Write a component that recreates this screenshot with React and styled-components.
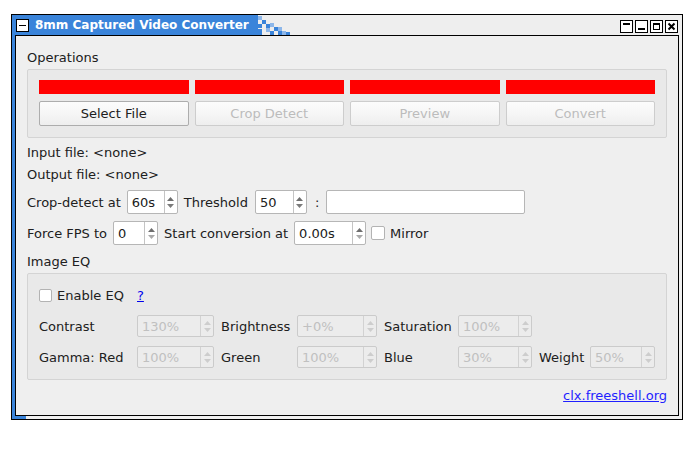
import React from "react";
import styled, { createGlobalStyle } from "styled-components";

const BLUE = "#3a84da";
const LIGHTBLUE = "#8db7ea";

const GlobalStyle = createGlobalStyle`
  html, body { margin: 0; padding: 0; background: #ffffff; }
  body {
    font-family: "DejaVu Sans", "Liberation Sans", sans-serif;
    font-size: 13px;
    color: #202020;
  }
`;

const Desktop = styled.div`
  padding: 14px 0 0 11px;
`;

const Window = styled.div`
  box-sizing: border-box;
  width: 672px;
  height: 406px;
  border: 1px solid #000;
  background: #f0f0f0;
  display: flex;
  flex-direction: column;
`;

const TitleBar = styled.div`
  height: 20px;
  flex: none;
  display: flex;
  align-items: stretch;
  background: #eeeeee;
`;

const TitleActive = styled.div`
  width: 242px;
  box-sizing: border-box;
  display: flex;
  align-items: center;
  gap: 6px;
  padding-left: 4px;
  background: ${BLUE};
  color: #ffffff;
  font-weight: bold;
  font-size: 12px;
  white-space: nowrap;
`;

const Spacer = styled.div`
  flex: 1;
`;

const WinButtons = styled.div`
  display: flex;
  gap: 2px;
  padding-top: 5px;
  margin-right: 4px;
`;

const WinBtn = styled.svg`
  display: block;
  flex: none;
`;

const Body = styled.div`
  flex: 1;
  display: flex;
  min-height: 0;
`;

const SideEdge = styled.div`
  width: 3px;
  flex: none;
  background: ${(p) => (p.$blue ? BLUE : "#f0f0f0")};
`;

const Client = styled.main`
  flex: 1;
  min-width: 0;
  border: 1px solid #000;
  background: #efefef;
  padding: 0 11px;
  display: flex;
  flex-direction: column;
`;

const BottomEdge = styled.div`
  height: 3px;
  flex: none;
  display: flex;
`;

const Grip = styled.div`
  width: 14px;
  background: ${BLUE};
`;

const Caption = styled.div`
  line-height: 16px;
  height: 16px;
  margin-top: ${(p) => p.$mt || 0}px;
  white-space: nowrap;
`;

const GroupBox = styled.section`
  border: 1px solid #d4d4d4;
  border-radius: 2px;
  background: #e9e9e9;
  padding: 10px 11px 11px;
  margin-top: ${(p) => p.$mt || 0}px;
`;

const OpsGrid = styled.div`
  display: grid;
  grid-template-columns: repeat(4, 1fr);
  column-gap: 6px;
  row-gap: 7px;
`;

const RedBar = styled.div`
  height: 14px;
  background: #ff0000;
`;

const PushButton = styled.button`
  height: 25px;
  margin: 0;
  padding: 0;
  font-family: inherit;
  font-size: 13px;
  border-radius: 2px;
  border: 1px solid ${(p) => (p.disabled ? "#cdcdcd" : "#adadad")};
  background: linear-gradient(#fcfcfc 0%, #f6f6f6 50%, #eeeeee 100%);
  color: ${(p) => (p.disabled ? "#bcbcbc" : "#202020")};
`;

const FormRow = styled.div`
  display: flex;
  align-items: center;
  gap: 6px;
  height: 24px;
  margin-top: ${(p) => p.$mt || 0}px;
  white-space: nowrap;
`;

const Colon = styled.span`
  padding: 0 1px 0 2px;
`;

const SpinBox = styled.div`
  box-sizing: border-box;
  width: ${(p) => (p.$w ? `${p.$w}px` : "100%")};
  height: ${(p) => p.$h}px;
  display: flex;
  flex: none;
  margin-left: ${(p) => p.$ml || 0}px;
  border: 1px solid ${(p) => (p.$disabled ? "#cbcbcb" : "#b6b6b6")};
  border-radius: 2px;
  background: ${(p) => (p.$disabled ? "#ececec" : "#ffffff")};
`;

const SpinText = styled.div`
  flex: 1;
  display: flex;
  align-items: center;
  padding-left: 4px;
  color: ${(p) => (p.$disabled ? "#c0c0c0" : "#202020")};
`;

const SpinArrows = styled.div`
  width: 12px;
  flex: none;
  border-left: 1px solid ${(p) => (p.$disabled ? "#d2d2d2" : "#c4c4c4")};
  display: flex;
  flex-direction: column;
  align-items: center;
  justify-content: center;
  gap: 3px;
`;

const LineEdit = styled.div`
  box-sizing: border-box;
  width: 199px;
  height: 24px;
  border: 1px solid #b6b6b6;
  border-radius: 2px;
  background: #ffffff;
`;

const CheckLabel = styled.label`
  display: flex;
  align-items: center;
  gap: 5px;
  margin-left: ${(p) => p.$ml || 0}px;
`;

const CheckBox = styled.span`
  box-sizing: border-box;
  display: block;
  width: ${(p) => p.$s}px;
  height: ${(p) => p.$s}px;
  border: 1px solid #b3b3b3;
  border-radius: 2px;
  background: #ffffff;
`;

const EqGrid = styled.div`
  display: grid;
  grid-template-columns: 91px 77px 69px 80px 67px 74px 44px 65px;
  grid-auto-rows: 22px;
  column-gap: 7px;
  row-gap: 9px;
  align-items: center;
  white-space: nowrap;
`;

const HelpLink = styled.a`
  color: #0000ee;
  text-decoration: underline;
`;

const FooterLink = styled.a`
  align-self: flex-end;
  line-height: 16px;
  margin-top: 8px;
  color: #1f1fff;
  text-decoration: underline;
`;

const Arrow = ({ up, color }) => (
  <svg width="7" height="4" viewBox="0 0 7 4" style={{ display: "block" }}>
    <path d={up ? "M0 4 L3.5 0 L7 4 Z" : "M0 0 L3.5 4 L7 0 Z"} fill={color} />
  </svg>
);

const Spin = ({ w, h = 24, ml, value, disabled, downDim }) => (
  <SpinBox $w={w} $h={h} $ml={ml} $disabled={disabled}>
    <SpinText $disabled={disabled}>{value}</SpinText>
    <SpinArrows $disabled={disabled}>
      <Arrow up color={disabled ? "#cdcdcd" : "#6e6e6e"} />
      <Arrow color={disabled ? "#cdcdcd" : downDim ? "#a9a9a9" : "#7a7a7a"} />
    </SpinArrows>
  </SpinBox>
);

const Checker = () => {
  const cells = [
    [0, 0, 4, 20, BLUE],
    [4, 1, 4, 4, LIGHTBLUE],
    [4, 9, 4, 4, BLUE],
    [4, 14, 4, 6, BLUE],
    [8, 5, 4, 4, BLUE],
    [12, 9, 4, 4, BLUE],
    [12, 13, 4, 4, LIGHTBLUE],
    [16, 8, 4, 4, LIGHTBLUE],
    [16, 16, 4, 4, BLUE],
    [20, 12, 4, 4, BLUE],
    [24, 12, 4, 4, LIGHTBLUE],
    [24, 16, 4, 4, BLUE],
    [28, 16, 4, 4, LIGHTBLUE],
    [32, 17, 4, 3, BLUE],
  ];
  return (
    <svg width="36" height="20" style={{ display: "block", flex: "none" }}>
      {cells.map(([x, y, w, h, c], i) => (
        <rect key={i} x={x} y={y} width={w} height={h} fill={c} />
      ))}
    </svg>
  );
};

const WinIcon = ({ kind }) => (
  <WinBtn width="13" height="13" viewBox="0 0 13 13">
    <rect x="0.5" y="0.5" width="12" height="12" fill="#ffffff" stroke="#000" />
    {kind === "menu" && <rect x="3" y="6" width="7" height="1" fill="#000" />}
    {kind === "shade" && <rect x="3" y="3" width="7" height="2" fill="#000" />}
    {kind === "min" && <rect x="3" y="8" width="7" height="2" fill="#000" />}
    {kind === "max" && (
      <>
        <rect x="3.5" y="3.5" width="6" height="6" fill="none" stroke="#000" />
        <rect x="3" y="3" width="7" height="2" fill="#000" />
      </>
    )}
    {kind === "close" && (
      <path d="M3.5 3.5 L9.5 9.5 M9.5 3.5 L3.5 9.5" stroke="#000" strokeWidth="2" />
    )}
  </WinBtn>
);

export default function App() {
  return (
    <>
      <GlobalStyle />
      <Desktop>
        <Window>
          <TitleBar>
            <TitleActive>
              <WinIcon kind="menu" />
              <span>8mm Captured Video Converter</span>
            </TitleActive>
            <Checker />
            <Spacer />
            <WinButtons>
              <WinIcon kind="shade" />
              <WinIcon kind="min" />
              <WinIcon kind="max" />
              <WinIcon kind="close" />
            </WinButtons>
          </TitleBar>
          <Body>
            <SideEdge $blue />
            <Client>
              <Caption $mt={14}>Operations</Caption>
              <GroupBox $mt={3}>
                <OpsGrid>
                  <RedBar />
                  <RedBar />
                  <RedBar />
                  <RedBar />
                  <PushButton>Select File</PushButton>
                  <PushButton disabled>Crop Detect</PushButton>
                  <PushButton disabled>Preview</PushButton>
                  <PushButton disabled>Convert</PushButton>
                </OpsGrid>
              </GroupBox>
              <Caption $mt={7}>Input file: &lt;none&gt;</Caption>
              <Caption $mt={6}>Output file: &lt;none&gt;</Caption>
              <FormRow $mt={7}>
                <span>Crop-detect at</span>
                <Spin w={51} value="60s" />
                <span>Threshold</span>
                <Spin w={52} ml={1} value="50" />
                <Colon>:</Colon>
                <LineEdit />
              </FormRow>
              <FormRow $mt={7}>
                <span>Force FPS to</span>
                <Spin w={45} value="0" downDim />
                <span>Start conversion at</span>
                <Spin w={72} value="0.00s" downDim />
                <CheckLabel $ml={-1}>
                  <CheckBox $s={14} />
                  <span>Mirror</span>
                </CheckLabel>
              </FormRow>
              <Caption $mt={9}>Image EQ</Caption>
              <GroupBox $mt={3}>
                <EqGrid>
                  <CheckLabel>
                    <CheckBox $s={13} />
                    <span>Enable EQ</span>
                  </CheckLabel>
                  <span>
                    <HelpLink>?</HelpLink>
                  </span>
                  <span />
                  <span />
                  <span />
                  <span />
                  <span />
                  <span />
                  <span>Contrast</span>
                  <Spin h={22} value="130%" disabled />
                  <span>Brightness</span>
                  <Spin h={22} value="+0%" disabled />
                  <span>Saturation</span>
                  <Spin h={22} value="100%" disabled />
                  <span />
                  <span />
                  <span>Gamma: Red</span>
                  <Spin h={22} value="100%" disabled />
                  <span>Green</span>
                  <Spin h={22} value="100%" disabled />
                  <span>Blue</span>
                  <Spin h={22} value="30%" disabled />
                  <span>Weight</span>
                  <Spin h={22} value="50%" disabled />
                </EqGrid>
              </GroupBox>
              <FooterLink>clx.freeshell.org</FooterLink>
            </Client>
            <SideEdge />
          </Body>
          <BottomEdge>
            <Grip />
          </BottomEdge>
        </Window>
      </Desktop>
    </>
  );
}
